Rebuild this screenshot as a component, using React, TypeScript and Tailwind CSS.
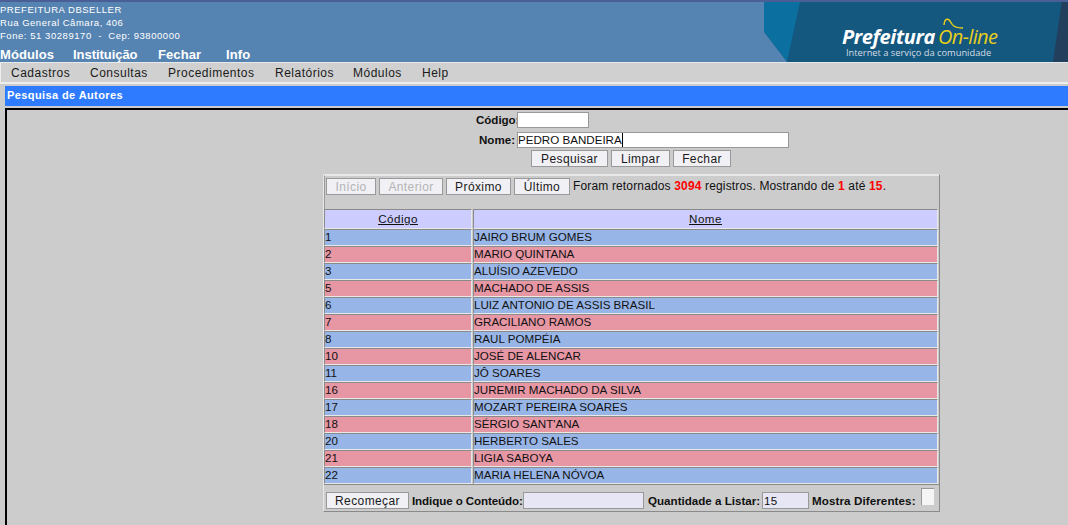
import React from "react";

const rows: [string, string][] = [
  ["1", "JAIRO BRUM GOMES"],
  ["2", "MARIO QUINTANA"],
  ["3", "ALUÍSIO AZEVEDO"],
  ["5", "MACHADO DE ASSIS"],
  ["6", "LUIZ ANTONIO DE ASSIS BRASIL"],
  ["7", "GRACILIANO RAMOS"],
  ["8", "RAUL POMPÉIA"],
  ["10", "JOSÉ DE ALENCAR"],
  ["11", "JÔ SOARES"],
  ["16", "JUREMIR MACHADO DA SILVA"],
  ["17", "MOZART PEREIRA SOARES"],
  ["18", "SÉRGIO SANT'ANA"],
  ["20", "HERBERTO SALES"],
  ["21", "LIGIA SABOYA"],
  ["22", "MARIA HELENA NÓVOA"],
];

function Btn({ children, w, disabled }: { children: React.ReactNode; w: string; disabled?: boolean }) {
  return (
    <div
      className={`${w} h-[17px] shrink-0 flex items-center justify-center border border-[#999999] bg-[#f0f0f5] text-[12px] leading-none tracking-[0.4px] ${disabled ? "text-[#b4b4b4]" : "text-[#1a1a1a]"}`}
    >
      {children}
    </div>
  );
}

function Cell({ w, bg, children, head }: { w: string; bg: string; children: React.ReactNode; head?: boolean }) {
  return (
    <div
      className={`${w} ${bg} ${head ? "justify-center underline tracking-[0.5px]" : "pb-px"} flex items-center h-full shrink-0 border border-t-[#8a8a8a] border-l-[#8a8a8a] border-b-[#e8e8e8] border-r-[#e8e8e8] text-[11.6px] leading-none text-[#111111] whitespace-nowrap overflow-hidden`}
    >
      {children}
    </div>
  );
}

export default function App() {
  return (
    <div className="w-[1068px] h-[525px] overflow-hidden bg-[#cccccc] font-['Liberation_Sans',Arial,sans-serif] flex flex-col">
      <header className="h-[63px] shrink-0 bg-[#5684b2] border-t-2 border-t-[#4a5f96] flex justify-between border-b border-b-[#e8e8e8]">
        <div className="flex flex-col text-white pt-px">
          <div className="h-[13px] text-[9.5px] leading-[13px] tracking-[0.52px]">PREFEITURA DBSELLER</div>
          <div className="h-[13px] text-[9.5px] leading-[13px] tracking-[0.52px]">Rua General Câmara, 406</div>
          <div className="h-[13px] text-[9.5px] leading-[13px] tracking-[0.55px] whitespace-pre">Fone: 51 30289170  -  Cep: 93800000</div>
          <div className="flex mt-[5px] text-[13px] leading-[15px] font-bold tracking-[0.1px]">
            <span className="w-[73px]">Módulos</span>
            <span className="w-[85px] tracking-[-0.05px]">Instituição</span>
            <span className="w-[68px]">Fechar</span>
            <span>Info</span>
          </div>
        </div>
        <div className="relative w-[304px] h-full shrink-0 bg-[#14577f]">
          <svg className="absolute inset-0" width="304" height="60" viewBox="0 0 304 60">
            <polygon points="0,0 36,0 23,60 0,30" fill="#0b6fa0" />
            <polygon points="0,30 23,60 0,60" fill="#5684b2" />
            <polygon points="289,60 297.7,0 304,0 304,60" fill="#233f5e" />
            <path d="M180 23 C180 18 183 15 186 19 C188 23 190 26 199 26" stroke="#e8cf1b" strokeWidth="1.5" fill="none" />
          </svg>
          <div className="absolute left-[78px] top-[25px] flex items-baseline whitespace-nowrap leading-none">
            <span className="w-[96px] text-[20px] font-bold italic text-white font-['Open_Sans',sans-serif] tracking-[-0.4px]">Prefeitura</span>
            <span className="text-[20px] italic text-[#e8cf1b] font-['Open_Sans',sans-serif] tracking-[-0.65px]">On-line</span>
          </div>
          <div className="absolute left-[82px] top-[46px] whitespace-nowrap text-[9.3px] leading-none text-[#d5dde4] font-['Open_Sans',sans-serif]">
            Internet a serviço da comunidade
          </div>
        </div>
      </header>

      <nav className="h-[19px] shrink-0 bg-[#d0d0d0] border-l border-l-[#eeeeee] flex items-center pl-[10px] pt-px text-[12px] leading-none text-[#1a1a1a] tracking-[0.5px]">
        <span className="w-[79px]">Cadastros</span>
        <span className="w-[78px]">Consultas</span>
        <span className="w-[107px]">Procedimentos</span>
        <span className="w-[78px]">Relatórios</span>
        <span className="w-[69px]">Módulos</span>
        <span>Help</span>
      </nav>
      <div className="h-[2px] shrink-0 bg-[#eeeeee]" />

      <div className="h-[20px] mt-[2px] ml-[5px] shrink-0 bg-[#2e7bff] flex items-center pl-[2px] pb-[2px] text-[11px] leading-none font-bold text-white tracking-[0.4px]">
        Pesquisa de Autores
      </div>

      <main className="mt-[2px] ml-[5px] flex-1 border-t-2 border-l-2 border-black flex flex-col min-h-0">
        <div className="h-[20px] flex items-center w-full pl-[469px] text-[11.6px] font-bold text-[#111111]">
          <span className="w-[41px] whitespace-nowrap tracking-[-0.05px]">Código:</span>
          <div className="w-[72px] h-[16px] bg-white border border-[#999999]" />
        </div>
        <div className="h-[20px] flex items-center w-full pl-[468px] text-[11.6px] font-bold text-[#111111]">
          <span className="w-[40px] text-right whitespace-nowrap">Nome:</span>
          <div className="w-[272px] h-[16px] ml-[2px] bg-white border border-[#999999] flex items-center font-normal">
            PEDRO BANDEIRA<span className="w-px h-[14px] bg-black" />
          </div>
        </div>
        <div className="flex gap-[3px] w-full pl-[524px] h-[17px] items-center">
          <Btn w="w-[77px]">Pesquisar</Btn>
          <Btn w="w-[59px]">Limpar</Btn>
          <Btn w="w-[58px]">Fechar</Btn>
        </div>

        <section className="mt-[7px] w-[617px] ml-[316px] h-[338px] flex flex-col border border-t-[#e8e8e8] border-l-[#e8e8e8] border-r-[#8a8a8a] border-b-[#8a8a8a]">
          <div className="h-[34px] shrink-0 pt-[2px] flex items-start gap-[3px] pl-[1px] text-[12px] text-[#111111] tracking-[0.15px] border-t border-l border-t-[#e8e8e8] border-l-[#999999]">
            <Btn w="w-[50px]" disabled>Início</Btn>
            <Btn w="w-[64px]" disabled>Anterior</Btn>
            <Btn w="w-[65px]">Próximo</Btn>
            <Btn w="w-[56px]">Último</Btn>
            <span className="leading-[17px] whitespace-nowrap">
              Foram retornados <b className="text-[#ff0000]">3094</b> registros. Mostrando de <b className="text-[#ff0000]">1</b> até <b className="text-[#ff0000]">15</b>.
            </span>
          </div>
          <div className="h-[20px] shrink-0 flex gap-[1px]">
            <Cell w="w-[148px]" bg="bg-[#ccccff]" head>Código</Cell>
            <Cell w="w-[465px]" bg="bg-[#ccccff]" head>Nome</Cell>
          </div>
          {rows.map(([c, n], i) => (
            <div key={c} className="h-[17px] shrink-0 flex gap-[1px]">
              <Cell w="w-[148px]" bg={i % 2 ? "bg-[#e796a4]" : "bg-[#97b5e6]"}>{c}</Cell>
              <Cell w="w-[465px]" bg={i % 2 ? "bg-[#e796a4]" : "bg-[#97b5e6]"}>{n}</Cell>
            </div>
          ))}
          <div className="flex-1 flex items-end pb-[2px] pl-[2px] text-[11.6px] font-bold text-[#111111] border-t border-t-[#8a8a8a]">
            <Btn w="w-[83px]"><span className="font-normal">Recomeçar</span></Btn>
            <span className="ml-[3px] w-[111px] leading-[17px] whitespace-nowrap tracking-[-0.1px]">Indique o Conteúdo:</span>
            <div className="w-[121px] h-[17px] bg-[#e6e6f5] border border-[#999999]" />
            <span className="ml-[4px] w-[114px] leading-[17px] whitespace-nowrap">Quantidade a Listar:</span>
            <div className="w-[47px] h-[17px] bg-[#e6e6f5] border border-[#999999] font-normal leading-[15px] pl-px tracking-[0.4px]">15</div>
            <span className="ml-[3px] w-[105px] leading-[17px] whitespace-nowrap tracking-[0.1px]">Mostra Diferentes:</span>
            <div className="w-[13px] h-[17px] ml-[4px] mb-[4px] bg-[#f5f5f5] border-t border-l border-[#999999]" />
          </div>
        </section>
      </main>
    </div>
  );
}
